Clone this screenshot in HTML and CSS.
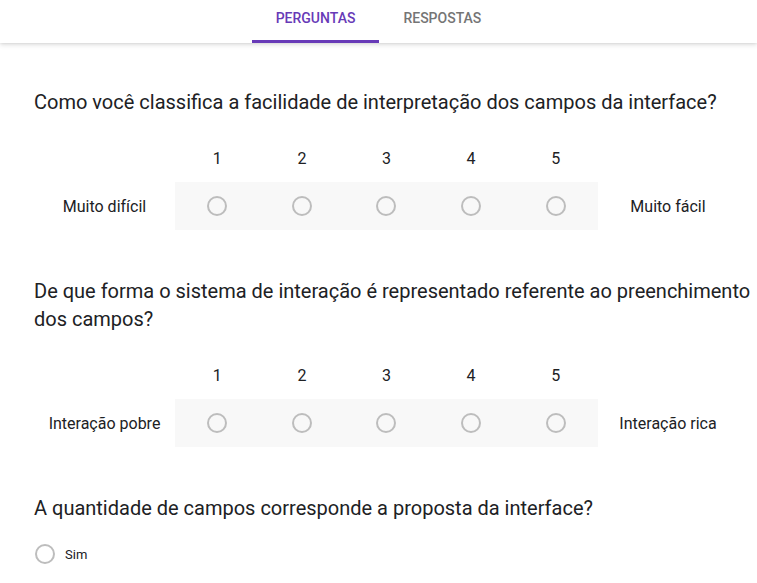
FILE: index.html
```html
<!DOCTYPE html>
<html lang="pt">
<head>
<meta charset="utf-8">
<link rel="stylesheet" href="styles.css">
</head>
<body>
<header class="tabs">
  <div class="tab active">PERGUNTAS</div>
  <div class="tab">RESPOSTAS</div>
</header>
<main class="form">
  <section class="question">
    <div class="q-title">Como você classifica a facilidade de interpretação dos campos da interface?</div>
    <div class="scale">
      <div class="num-row">
        <span></span><span>1</span><span>2</span><span>3</span><span>4</span><span>5</span><span></span>
      </div>
      <div class="radio-row">
        <span class="end-label">Muito difícil</span>
        <div class="band">
          <span class="cell"><i class="radio"></i></span>
          <span class="cell"><i class="radio"></i></span>
          <span class="cell"><i class="radio"></i></span>
          <span class="cell"><i class="radio"></i></span>
          <span class="cell"><i class="radio"></i></span>
        </div>
        <span class="end-label">Muito fácil</span>
      </div>
    </div>
  </section>
  <section class="question">
    <div class="q-title">De que forma o sistema de interação é representado referente ao preenchimento dos campos?</div>
    <div class="scale">
      <div class="num-row">
        <span></span><span>1</span><span>2</span><span>3</span><span>4</span><span>5</span><span></span>
      </div>
      <div class="radio-row">
        <span class="end-label">Interação pobre</span>
        <div class="band">
          <span class="cell"><i class="radio"></i></span>
          <span class="cell"><i class="radio"></i></span>
          <span class="cell"><i class="radio"></i></span>
          <span class="cell"><i class="radio"></i></span>
          <span class="cell"><i class="radio"></i></span>
        </div>
        <span class="end-label">Interação rica</span>
      </div>
    </div>
  </section>
  <section class="question">
    <div class="q-title">A quantidade de campos corresponde a proposta da interface?</div>
    <label class="option"><i class="radio"></i><span>Sim</span></label>
  </section>
</main>
</body>
</html>
```
FILE: styles.css
```css
html, body {
  margin: 0;
  padding: 0;
  background: #fff;
  overflow: hidden;
}
body {
  font-family: Roboto, "Liberation Sans", Arial, sans-serif;
  color: #202124;
}
.tabs {
  height: 43px;
  display: flex;
  justify-content: center;
  background: #fff;
  box-shadow: 0 2px 5px rgba(0,0,0,0.12), 0 1px 2px rgba(0,0,0,0.06);
  position: relative;
}
.tab {
  box-sizing: border-box;
  height: 43px;
  padding: 10px 24px 0;
  font-size: 14px;
  line-height: 16px;
  font-weight: 500;
  color: #757575;
}
.tab.active {
  color: #673ab7;
  border-bottom: 3px solid #673ab7;
}
.form {
  padding: 45px 0 0 34px;
}
.question {
  margin-bottom: 47px;
}
.q-title {
  font-size: 20px;
  line-height: 28px;
  color: #202124;
}
.scale {
  margin-top: 18px;
  width: 704px;
  font-size: 16px;
}
.num-row {
  display: grid;
  grid-template-columns: 141px repeat(5, 1fr) 140px;
  height: 48px;
  align-items: center;
  text-align: center;
}
.radio-row {
  display: grid;
  grid-template-columns: 141px 1fr 140px;
  height: 48px;
  align-items: center;
}
.end-label {
  text-align: center;
}
.band {
  height: 48px;
  background: #f8f8f8;
  display: grid;
  grid-template-columns: repeat(5, 1fr);
  align-items: center;
}
.cell {
  display: flex;
  justify-content: center;
}
.radio {
  display: block;
  box-sizing: border-box;
  width: 20px;
  height: 20px;
  border: 2px solid #bdbdbd;
  border-radius: 50%;
}
.option {
  margin-top: 16px;
  display: flex;
  align-items: center;
  height: 32px;
  font-size: 13px;
  gap: 10px;
  padding-left: 1px;
}
```
